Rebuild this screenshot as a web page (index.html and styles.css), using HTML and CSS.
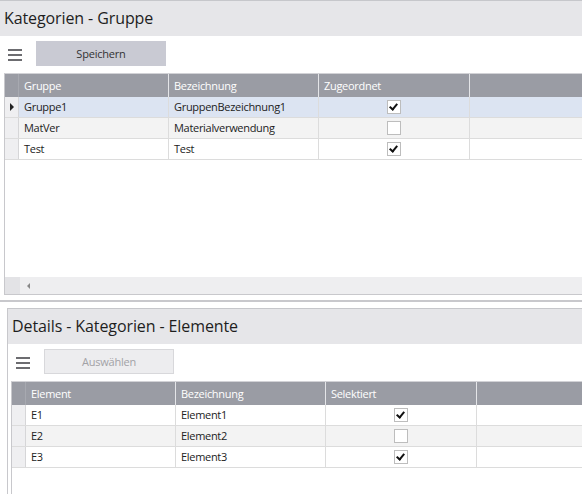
FILE: index.html
```html
<!DOCTYPE html>
<html lang="de">
<head>
  <meta charset="UTF-8">
  <title>Kategorien - Gruppe</title>
  <link rel="stylesheet" href="styles.css">
</head>
<body>
  <div class="panel">
    <div class="panel-title">Kategorien - Gruppe</div>
    <div class="toolbar">
      <span class="burger"><i></i><i></i><i></i></span>
      <button class="btn">Speichern</button>
    </div>
    <div class="grid grid-top">
      <div class="row head">
        <div class="cell rh"></div>
        <div class="cell">Gruppe</div>
        <div class="cell">Bezeichnung</div>
        <div class="cell">Zugeordnet</div>
        <div class="cell fill"></div>
      </div>
      <div class="row sel">
        <div class="cell rh"><span class="arrow"></span></div>
        <div class="cell">Gruppe1</div>
        <div class="cell">GruppenBezeichnung1</div>
        <div class="cell chk"><span class="box on"></span></div>
        <div class="cell fill"></div>
      </div>
      <div class="row alt">
        <div class="cell rh"></div>
        <div class="cell">MatVer</div>
        <div class="cell">Materialverwendung</div>
        <div class="cell chk"><span class="box"></span></div>
        <div class="cell fill"></div>
      </div>
      <div class="row">
        <div class="cell rh"></div>
        <div class="cell">Test</div>
        <div class="cell">Test</div>
        <div class="cell chk"><span class="box on"></span></div>
        <div class="cell fill"></div>
      </div>
      <div class="grid-space"></div>
      <div class="hscroll">
        <div class="hs-corner"></div>
        <div class="hs-track"><span class="hs-left"></span></div>
      </div>
    </div>
  </div>

  <div class="divider"></div>

  <div class="panel panel-sub">
    <div class="panel-title">Details - Kategorien - Elemente</div>
    <div class="toolbar">
      <span class="burger"><i></i><i></i><i></i></span>
      <button class="btn" disabled>Auswählen</button>
    </div>
    <div class="grid grid-sub">
      <div class="row head">
        <div class="cell rh"></div>
        <div class="cell">Element</div>
        <div class="cell">Bezeichnung</div>
        <div class="cell">Selektiert</div>
        <div class="cell fill"></div>
      </div>
      <div class="row">
        <div class="cell rh"></div>
        <div class="cell">E1</div>
        <div class="cell">Element1</div>
        <div class="cell chk"><span class="box on"></span></div>
        <div class="cell fill"></div>
      </div>
      <div class="row alt">
        <div class="cell rh"></div>
        <div class="cell">E2</div>
        <div class="cell">Element2</div>
        <div class="cell chk"><span class="box"></span></div>
        <div class="cell fill"></div>
      </div>
      <div class="row">
        <div class="cell rh"></div>
        <div class="cell">E3</div>
        <div class="cell">Element3</div>
        <div class="cell chk"><span class="box on"></span></div>
        <div class="cell fill"></div>
      </div>
      <div class="grid-space"></div>
    </div>
  </div>
</body>
</html>
```

FILE: styles.css
```css
body {
  margin: 0;
  width: 582px;
  height: 495px;
  overflow: hidden;
  background: #fff;
  font-family: "Open Sans", "Noto Sans", sans-serif;
  color: #222;
}
.panel {
  border-top: 1px solid #c6c7cb;
}
.panel-title {
  height: 35px;
  line-height: 34px;
  padding-left: 4px;
  background: #e6e6e9;
  font-size: 16px;
  color: #1e1e1e;
  letter-spacing: -0.1px;
}
.toolbar {
  height: 37px;
  display: flex;
  align-items: center;
  gap: 14px;
  padding-left: 8px;
}
.burger {
  width: 14px;
  display: flex;
  flex-direction: column;
  gap: 3px;
}
.burger i {
  display: block;
  height: 2px;
  background: #6c6c70;
}
.btn {
  width: 130px;
  height: 25px;
  border: none;
  background: #c9cad3;
  color: #333;
  font-family: inherit;
  font-size: 11px;
  letter-spacing: -0.2px;
  padding: 0;
  margin-top: -2px;
}
.btn:disabled {
  background: #ededef;
  border: 1px solid #d8d8db;
  color: #a2a2a6;
}
.grid {
  margin-left: 4px;
  border-left: 1px solid #c8c8cc;
  border-bottom: 1px solid #c8c8cc;
  border-top: 1px solid #d2d2d6;
  display: flex;
  flex-direction: column;
}
.grid-top {
  height: 220px;
}
.row {
  display: grid;
  grid-template-columns: 14px 150px 150px 151px 1fr;
  height: 20px;
  border-bottom: 1px solid #dcdcdc;
  font-size: 11px;
  letter-spacing: -0.3px;
}
.row.head {
  height: 23px;
  background: #9a9ca4;
  color: #fff;
  border-bottom: none;
}
.row.sel {
  background: #dce4f2;
}
.row.alt {
  background: #f3f3f3;
}
.cell {
  border-right: 1px solid #dcdcdc;
  padding-left: 5px;
  line-height: 20px;
  white-space: nowrap;
  overflow: hidden;
}
.head .cell {
  line-height: 23px;
  border-right-color: #e4e5e8;
}
.head .cell.rh {
  border-right-color: #a7a9b0;
  background: #9a9ca4;
}
.cell.rh {
  padding: 0;
  background: #efeff1;
  border-right-color: #d6d6d8;
  display: flex;
  align-items: center;
  justify-content: center;
}
.cell.fill {
  border-right: none;
}
.cell.chk {
  display: flex;
  align-items: center;
  justify-content: center;
  padding-left: 0;
}
.arrow {
  width: 0;
  height: 0;
  border-top: 4px solid transparent;
  border-bottom: 4px solid transparent;
  border-left: 4px solid #222;
  margin-left: 1px;
}
.box {
  width: 12px;
  height: 12px;
  border: 1px solid #bdbdbd;
  background: #fff;
  position: relative;
}
.box.on::after {
  content: "";
  position: absolute;
  left: 3px;
  top: 1px;
  width: 3px;
  height: 6px;
  border-right: 2px solid #111;
  border-bottom: 2px solid #111;
  transform: rotate(40deg);
}
.grid-space {
  flex: 1;
}
.hscroll {
  height: 17px;
  display: flex;
}
.hs-corner {
  width: 15px;
  background: #e3e3e6;
}
.hs-track {
  flex: 1;
  background: #eeeef0;
  display: flex;
  align-items: center;
  padding-left: 7px;
}
.hs-left {
  width: 0;
  height: 0;
  border-top: 3px solid transparent;
  border-bottom: 3px solid transparent;
  border-right: 3px solid #888;
}
.divider {
  height: 5px;
  border-bottom: 2px solid #c8c8cc;
  margin-bottom: 6px;
}
.panel-sub {
  margin-left: 7px;
  border-left: 1px solid #c8c8cc;
}
.grid-sub {
  margin-left: 3px;
  border-bottom: none;
  height: 112px;
}
```
